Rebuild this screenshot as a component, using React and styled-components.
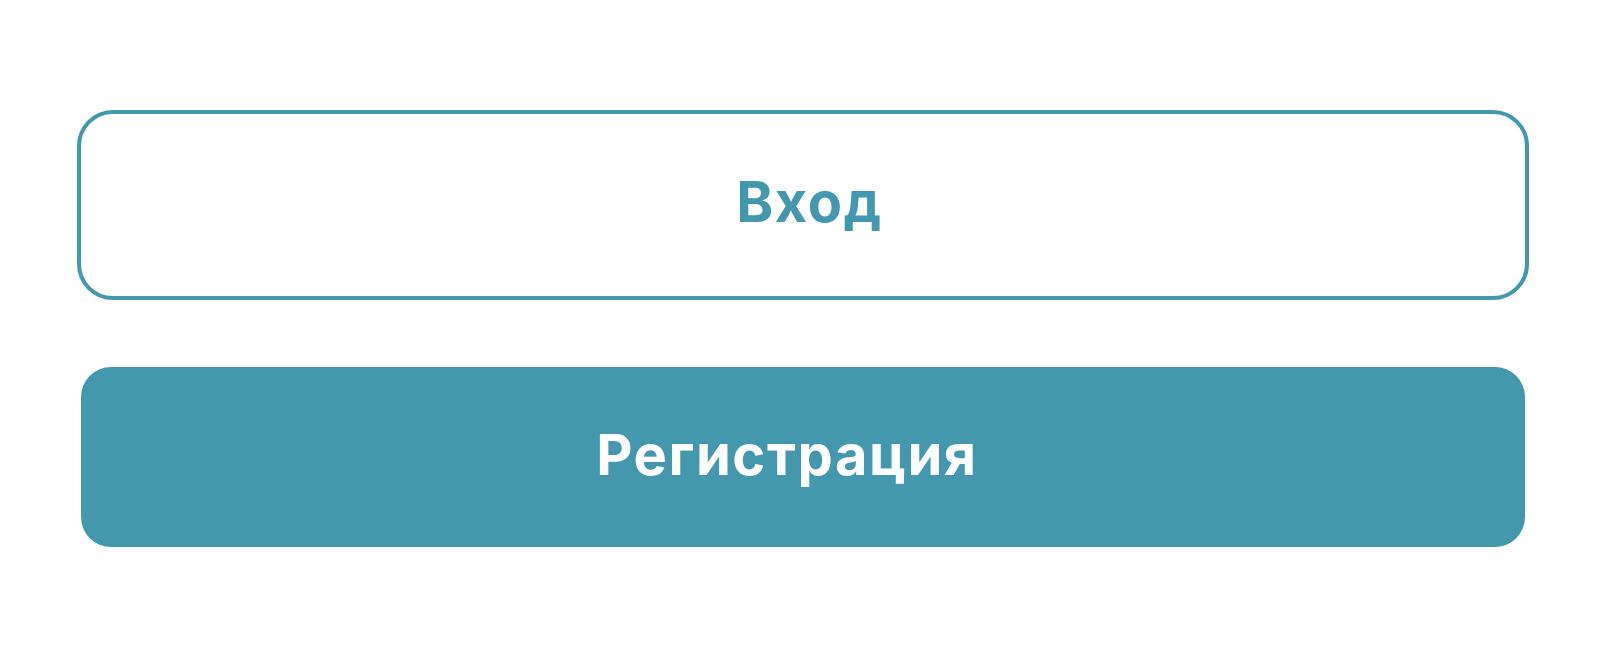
import styled, { createGlobalStyle } from 'styled-components';

const GlobalStyle = createGlobalStyle`
	body {
		margin: 0;
		background: #ffffff;
		font-family: Inter, "Noto Sans", sans-serif;
	}
`;

const teal = '#4498ad';

const Page = styled.div`
	display: flex;
	flex-direction: column;
	align-items: flex-start;
	gap: 67px;
	padding: 110px 0 0 77px;
	min-height: 656px;
	box-sizing: border-box;
`;

const Button = styled.button`
	display: flex;
	align-items: center;
	justify-content: center;
	box-sizing: border-box;
	width: ${(p) => (p.$filled ? '1444px' : '1452px')};
	height: ${(p) => (p.$filled ? '180px' : '190px')};
	margin-left: ${(p) => (p.$filled ? '4px' : '0')};
	padding: ${(p) =>
		p.$filled ? '0 32px 4px 0' : '0 0 6px 13px'};
	border: ${(p) => (p.$filled ? 'none' : `4px solid ${teal}`)};
	border-radius: ${(p) => (p.$filled ? '30px' : '36px')};
	background: ${(p) => (p.$filled ? teal : '#ffffff')};
	color: ${(p) => (p.$filled ? '#ffffff' : teal)};
	font-family: Inter, "Noto Sans", sans-serif;
	font-size: 56px;
	font-weight: 700;
	letter-spacing: 1.6px;
	cursor: pointer;
`;

const App = () => {
	return (
		<>
			<GlobalStyle />
			<Page>
				<Button>Вход</Button>
				<Button $filled>Регистрация</Button>
			</Page>
		</>
	);
};

export default App;
